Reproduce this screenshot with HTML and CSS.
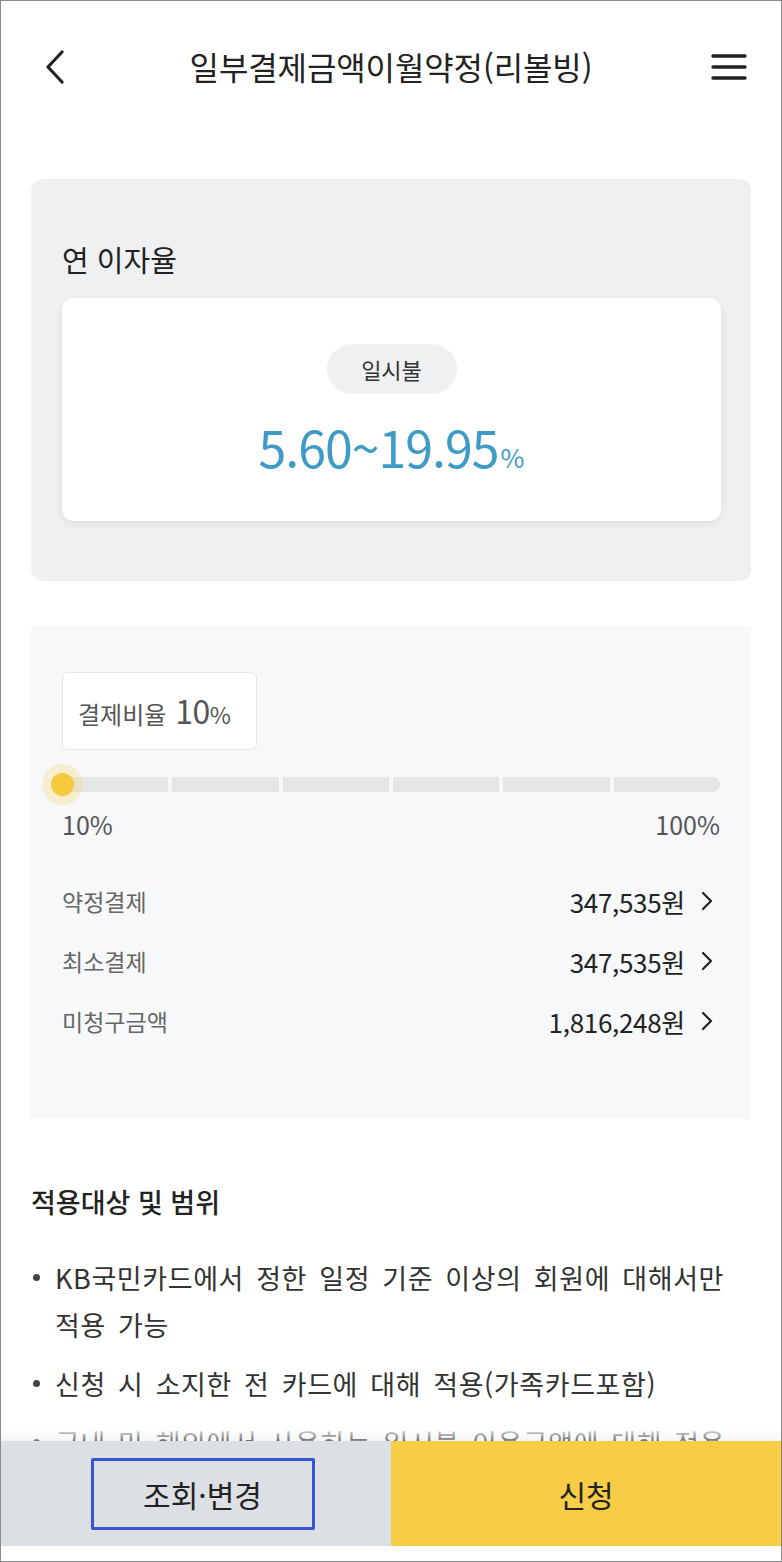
FILE: index.html
```html
<!DOCTYPE html>
<html lang="ko">
<head>
<meta charset="utf-8">
<title>일부결제금액이월약정(리볼빙)</title>
<link rel="stylesheet" href="styles.css">
</head>
<body>
<div class="frame">
  <header class="topbar">
    <button class="icon-btn back" aria-label="뒤로">
      <svg width="24" height="34" viewBox="0 0 24 34"><path d="M19 2 L5 17 L19 32" fill="none" stroke="#222" stroke-width="3.2" stroke-linecap="round" stroke-linejoin="round"/></svg>
    </button>
    <h1 class="title">일부결제금액이월약정(리볼빙)</h1>
    <button class="icon-btn menu" aria-label="메뉴">
      <svg width="36" height="28" viewBox="0 0 36 28"><path d="M2 3 H34 M2 14 H34 M2 25 H34" stroke="#222" stroke-width="3.4" stroke-linecap="round"/></svg>
    </button>
  </header>

  <main class="content">
    <section class="rate-box">
      <h2 class="rate-title">연 이자율</h2>
      <div class="rate-card">
        <span class="pill">일시불</span>
        <p class="rate"><span class="rate-num">5.60~19.95</span><span class="rate-pct">%</span></p>
      </div>
    </section>

    <section class="ratio-box">
      <div class="tooltip"><span class="tt-label">결제비율</span> <span class="tt-num">10</span><span class="tt-pct">%</span></div>
      <div class="slider">
        <div class="track">
          <span class="seg"></span><span class="seg"></span><span class="seg"></span><span class="seg"></span><span class="seg"></span><span class="seg"></span>
        </div>
        <span class="thumb"></span>
      </div>
      <div class="scale"><span>10%</span><span>100%</span></div>
      <ul class="amounts">
        <li class="amount-row"><span class="a-label">약정결제</span><span class="a-val">347,535원<svg class="chev" width="12" height="20" viewBox="0 0 12 20"><path d="M2 2 L10 10 L2 18" fill="none" stroke="#222" stroke-width="2.2" stroke-linecap="round" stroke-linejoin="round"/></svg></span></li>
        <li class="amount-row"><span class="a-label">최소결제</span><span class="a-val">347,535원<svg class="chev" width="12" height="20" viewBox="0 0 12 20"><path d="M2 2 L10 10 L2 18" fill="none" stroke="#222" stroke-width="2.2" stroke-linecap="round" stroke-linejoin="round"/></svg></span></li>
        <li class="amount-row"><span class="a-label">미청구금액</span><span class="a-val">1,816,248원<svg class="chev" width="12" height="20" viewBox="0 0 12 20"><path d="M2 2 L10 10 L2 18" fill="none" stroke="#222" stroke-width="2.2" stroke-linecap="round" stroke-linejoin="round"/></svg></span></li>
      </ul>
    </section>

    <section class="scope">
      <h3 class="scope-title">적용대상 및 범위</h3>
      <ul class="bullets">
        <li>KB국민카드에서 정한 일정 기준 이상의 회원에 대해서만 적용 가능</li>
        <li>신청 시 소지한 전 카드에 대해 적용(가족카드포함)</li>
        <li>국내 및 해외에서 사용하는 일시불 이용금액에 대해 적용</li>
      </ul>
    </section>
  </main>

  <footer class="actions">
    <div class="act act-left"><button class="btn-outline">조회·변경</button></div>
    <div class="act act-right"><button class="btn-plain">신청</button></div>
  </footer>
</div>
</body>
</html>
```

FILE: styles.css
```css
* { box-sizing: border-box; margin: 0; padding: 0; }
html, body { background: #fff; }
body {
  font-family: "Noto Sans CJK KR", "Noto Sans", sans-serif;
  color: #222;
}
.frame {
  position: relative;
  width: 782px;
  height: 1562px;
  border: 1px solid #8a8a8a;
  overflow: hidden;
  background: #fff;
}
button { font-family: inherit; background: none; border: 0; color: inherit; }

.topbar {
  height: 129px;
  display: flex;
  align-items: center;
  justify-content: space-between;
  padding: 0 34px 0 42px;
}
.icon-btn { display: flex; align-items: center; justify-content: center; }
.back { margin-top: 2px; }
.menu { margin-top: 2px; }
.title {
  font-size: 32px;
  font-weight: 400;
  letter-spacing: -0.1px;
  line-height: 40px;
  color: #222;
  margin-left: 4px;
}

.content { padding: 0 30px; }

.rate-box {
  margin-top: 49px;
  background: #eef0f2;
  border-radius: 12px;
  padding: 60px 30px 60px 31px;
}
.rate-title {
  font-size: 29px;
  font-weight: 400;
  line-height: 40px;
  color: #222;
}
.rate-card {
  margin-top: 19px;
  background: #fff;
  border-radius: 12px;
  box-shadow: 0 3px 8px rgba(0,0,0,0.08);
  height: 223px;
  display: flex;
  flex-direction: column;
  align-items: center;
  padding-top: 46px;
}
.pill {
  display: inline-flex;
  align-items: center;
  justify-content: center;
  height: 50px;
  width: 130px;
  border-radius: 25px;
  background: #eef0f2;
  font-size: 22px;
  color: #333;
}
.rate {
  margin-top: 22px;
  line-height: 60px;
  color: #3e9bc6;
  display: flex;
  align-items: baseline;
}
.rate-num { font-size: 50px; letter-spacing: -1px; }
.rate-pct { font-size: 26px; margin-left: 2px; }

.ratio-box {
  margin-top: 45px;
  background: #f7f8fa;
  padding: 46px 31px 68px 31px;
  height: 493px;
}
.tooltip {
  width: 195px;
  height: 78px;
  background: #fff;
  border: 1.5px solid #e6e6e6;
  border-radius: 6px;
  display: flex;
  align-items: baseline;
  justify-content: flex-start;
  padding: 14px 0 0 15px;
  color: #555;
}
.tt-label { font-size: 24px; margin-right: 9px; }
.tt-num { font-size: 32px; letter-spacing: -0.5px; }
.tt-pct { font-size: 23px; }

.slider {
  position: relative;
  margin-top: 27px;
  height: 15px;
}
.track {
  display: flex;
  gap: 4px;
  height: 15px;
}
.seg { flex: 1; background: #e4e5e7; }
.seg:first-child { border-radius: 8px 0 0 8px; }
.seg:last-child { border-radius: 0 8px 8px 0; }
.thumb {
  position: absolute;
  left: -11px;
  top: -4px;
  width: 23px;
  height: 23px;
  border-radius: 50%;
  background: #f6c93f;
  box-shadow: 0 0 0 9px rgba(246, 214, 110, 0.3);
}
.scale {
  display: flex;
  justify-content: space-between;
  margin-top: 17px;
  font-size: 25px;
  line-height: 30px;
  color: #555;
}

.amounts { list-style: none; margin-top: 32px; }
.amount-row {
  height: 60px;
  display: flex;
  align-items: center;
  justify-content: space-between;
}
.a-label { font-size: 23px; color: #666; }
.a-val {
  font-size: 26px;
  color: #222;
  display: flex;
  align-items: center;
  letter-spacing: -0.3px;
}
.chev { margin-left: 16px; margin-right: 7px; }

.scope { padding-top: 63px; }
.scope-title {
  font-size: 27px;
  font-weight: 500;
  line-height: 40px;
  color: #222;
}
.bullets {
  list-style: none;
  margin-top: 32px;
}
.bullets li {
  position: relative;
  padding-left: 24px;
  font-size: 27px;
  line-height: 47px;
  color: #333;
  margin-bottom: 12px;
  letter-spacing: 0.6px;
  word-spacing: 4px;
  word-break: keep-all;
}
.bullets li::before {
  content: "";
  position: absolute;
  left: 2px;
  top: 20px;
  width: 7px;
  height: 7px;
  border-radius: 50%;
  background: #444;
}

.actions {
  position: absolute;
  left: 0;
  right: 0;
  bottom: 15px;
  height: 105px;
  display: flex;
}
.actions::before {
  content: "";
  position: absolute;
  left: 0;
  right: 0;
  top: -22px;
  height: 22px;
  background: linear-gradient(to bottom, #fff 0%, rgba(255,255,255,0.85) 45%, rgba(225,227,230,0.35) 100%);
}
.act {
  flex: 1 1 0;
  display: flex;
  align-items: center;
  justify-content: center;
}
.act-left { background: #dcdfe3; }
.act-right { background: #f7cd47; }
.btn-outline {
  width: 224px;
  height: 72px;
  margin-left: 13px;
  border: 3px solid #3456d1;
  border-radius: 2px;
  font-size: 30px;
  color: #222;
}
.btn-plain { font-size: 30px; color: #222; }
```
